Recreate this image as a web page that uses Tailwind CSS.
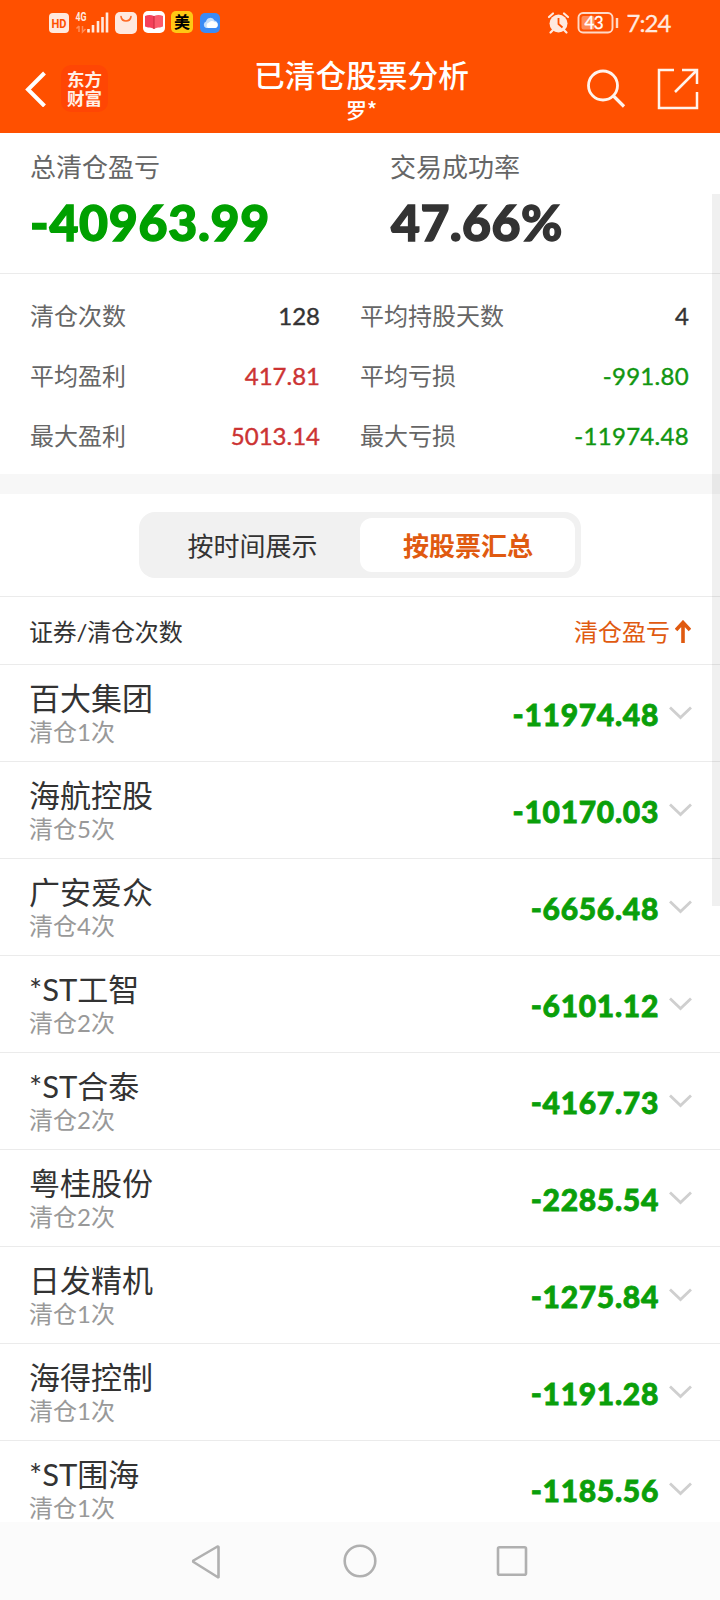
<!DOCTYPE html>
<html lang="zh-CN">
<head>
  <meta charset="UTF-8" />
  <meta name="viewport" content="width=device-width, initial-scale=1.0" />
  <title>已清仓股票分析</title>
  <script src="https://cdn.jsdelivr.net/npm/@tailwindcss/browser@4"></script>
</head>
<body class="bg-white text-[#333] font-[Lato,'Noto_Sans_CJK_SC',sans-serif]">
<div class="relative w-[720px] h-[1600px] flex flex-col overflow-hidden">

  <!-- Header -->
  <header class="h-[133px] shrink-0 bg-[#ff5000] text-white flex flex-col">
    <!-- Status bar -->
    <div class="h-[46px] flex justify-between pl-12 pr-[46px]">
      <svg class="w-[176px] h-[46px]" viewBox="48 0 176 46">
        <rect x="49" y="13" width="20" height="20" rx="4" fill="#ffe9df" />
        <text x="59" y="28" text-anchor="middle" textLength="15" lengthAdjust="spacingAndGlyphs" class="font-[Roboto] font-bold text-[13.500px] fill-[#ff5000]">HD</text>
        <text x="75.5" y="21" textLength="11" lengthAdjust="spacingAndGlyphs" class="font-[Roboto] font-bold text-[12px] fill-[#ffe9df]">4G</text>
        <path d="M79 26v6M79 26l-2.500 2.500M82.500 26v6l3-3" stroke="#ff8d59" stroke-width="1.500" fill="none" />
        <path d="M88.500 29v3.500M93 25v7.500M98 21v11.500M102.500 17v15.500M107 12.500v20" stroke="#ffe9df" stroke-width="2.600" fill="none" />
        <rect x="115" y="12" width="22" height="22" rx="5" fill="#ffe9df" />
        <path d="M121 16.500c1 6 9 6 10 0" stroke="#ff6a26" stroke-width="1.600" fill="none" stroke-linecap="round" />
        <rect x="143" y="11" width="22" height="22" rx="5" fill="#fff" />
        <path d="M145 16c3-1.500 6-1.500 9 0v13c-2-1.500-4-1.500-6-1.500l-3-1z" fill="#f5405a" />
        <path d="M163 16c-3-1.500-6-1.500-9 0v13c2-1.500 4-1.500 6-1.500l3-1z" fill="#fb5b6d" />
        <path d="M154 16v13" stroke="#c8283c" stroke-width="1" />
        <rect x="171" y="11" width="22" height="22" rx="5" fill="#ffc814" />
        <text x="182" y="28" text-anchor="middle" class="font-bold text-[16px] fill-black">美</text>
        <rect x="200" y="13" width="20" height="20" rx="5" fill="#3b8bf5" />
        <path d="M206 28a3.500 3.500 0 0 1 0-6.500a4.500 4.500 0 0 1 8.500-1a3.900 3.900 0 0 1 .500 7.500z" fill="#c5defb" />
        <path d="M208 28a3 3 0 0 1 1-5.500a3.500 3.500 0 0 1 5.500-.500a3 3 0 0 1 .500 6z" fill="#fff" />
      </svg>
      <svg class="w-[130px] h-[46px]" viewBox="544 0 130 46">
        <circle cx="558.500" cy="23.500" r="9" fill="#ffe9df" />
        <path d="M549 17l4-3.500M568 17l-4-3.500M553 30l-2.500 2.500M564 30l2.500 2.500" stroke="#ffe9df" stroke-width="2.200" stroke-linecap="round" />
        <path d="M558.500 18v6l4 3.500" stroke="#ff5000" stroke-width="1.800" fill="none" />
        <rect x="578.500" y="13" width="34" height="19.500" rx="4.500" fill="none" stroke="#ffd9c7" stroke-width="1.900" />
        <rect x="581.500" y="16" width="13" height="13.500" rx="2" fill="#ff8c59" />
        <path d="M617 18v10" stroke="#ffd9c7" stroke-width="2.400" />
        <text x="594" y="28.500" text-anchor="middle" textLength="19" class="text-[17px] fill-white stroke-white stroke-[0.300px]">43</text>
        <text x="626.500" y="32" textLength="45" class="text-[24px] fill-[#ffe9df] stroke-[#ffe9df] stroke-[0.300px]">7:24</text>
      </svg>
    </div>

    <!-- Title bar -->
    <div class="flex-1 flex items-start justify-between">
      <div class="w-[200px] flex items-center pt-[19px] pl-[25px]">
        <svg class="w-[22px] h-9" viewBox="0 0 22 36" fill="none" stroke="white" stroke-width="4"><path d="M19.500 2L3 18.500L19.500 35" /></svg>
        <div class="ml-[14px] w-[47px] h-[47px] rounded-[10px] bg-[#ff4604] flex flex-col items-center justify-center text-[17.500px] leading-[19px] font-bold text-[#fff0e6]">
          <span>东方</span>
          <span>财富</span>
        </div>
      </div>
      <div class="flex flex-col items-center pt-[10px] pl-[3px]">
        <h1 class="text-[30.700px] leading-[40px] font-medium">已清仓股票分析</h1>
        <p class="text-[21px] leading-[26px] font-medium">罗<span class="font-['Noto_Sans_CJK_SC']">*</span></p>
      </div>
      <div class="w-[200px] flex justify-end pt-[22px] pr-[21px]">
        <svg class="w-[112px] h-[42px]" viewBox="587 68 112 42" fill="none" stroke="#fff3ec" stroke-width="2.800">
          <circle cx="603" cy="85.500" r="14.500" />
          <path d="M613 95.500l11 11" stroke-width="3.200" />
          <path d="M674 70h-15v38h38v-16M682 70h15v14M675 92l22-22" stroke-width="2.500" />
        </svg>
      </div>
    </div>
  </header>

  <!-- Summary -->
  <section class="h-[141px] shrink-0 grid grid-cols-2 border-b border-[#ebebeb]">
    <div class="pl-[30px] pt-4">
      <p class="text-[26px] leading-9 text-[#666]">总清仓盈亏</p>
      <p class="text-[50px] leading-[60px] mt-[7px] font-black tracking-[0.700px] text-[#00a000] [-webkit-text-stroke:1.4px_#00a000]">-40963.99</p>
    </div>
    <div class="pl-[30px] pt-4">
      <p class="text-[26px] leading-9 text-[#666]">交易成功率</p>
      <p class="pl-px text-[50px] leading-[60px] mt-[7px] font-black tracking-[0.400px] [-webkit-text-stroke:1.4px_#333]">47.66%</p>
    </div>
  </section>

  <!-- Stats -->
  <section class="h-[200px] shrink-0 grid grid-cols-[290px_329px] gap-x-[40px] auto-rows-[60px] items-center pt-3 pl-[30px] text-[24px] leading-[36px] text-[#666]">
    <div class="flex justify-between"><span>清仓次数</span><span class="text-[#333] [-webkit-text-stroke:0.4px_#333]">128</span></div>
    <div class="flex justify-between"><span>平均持股天数</span><span class="text-[#333] [-webkit-text-stroke:0.4px_#333]">4</span></div>
    <div class="flex justify-between"><span>平均盈利</span><span class="text-[#cc3333] [-webkit-text-stroke:0.4px_#cc3333]">417.81</span></div>
    <div class="flex justify-between"><span>平均亏损</span><span class="tracking-[0.300px] text-[#119611] [-webkit-text-stroke:0.4px_#119611]">-991.80</span></div>
    <div class="flex justify-between"><span>最大盈利</span><span class="text-[#cc3333] [-webkit-text-stroke:0.4px_#cc3333]">5013.14</span></div>
    <div class="flex justify-between"><span>最大亏损</span><span class="tracking-[0.300px] text-[#119611] [-webkit-text-stroke:0.4px_#119611]">-11974.48</span></div>
  </section>

  <div class="h-5 shrink-0 bg-[#f7f7f7]"></div>

  <!-- Tabs -->
  <div class="h-[103px] shrink-0 flex justify-center pt-[18px] border-b border-[#ebebeb]">
    <div class="w-[442px] h-[66px] rounded-2xl bg-[#f1f1f1] p-1.5 flex text-[26px]">
      <button class="flex-1 pt-0.5">按时间展示</button>
      <button class="w-[215px] pt-0.5 pl-px rounded-xl bg-white font-bold text-[#e05a10]">按股票汇总</button>
    </div>
  </div>

  <!-- List header -->
  <div class="h-[68px] shrink-0 flex items-center justify-between pt-0.5 pl-[29px] pr-[29px] text-[24px] border-b border-[#ebebeb]">
    <span class="tracking-[-0.200px]">证券/清仓次数</span>
    <span class="flex items-center gap-[5px] text-[#e05a10]">
      清仓盈亏
      <svg class="w-4 h-6" viewBox="0 0 16 24" fill="none" stroke="currentColor" stroke-width="3.600"><path d="M8 23V3M1 10l7-7.500L15 10" /></svg>
    </span>
  </div>

  <!-- Stocks -->
  <main id="stockList" class="flex-1 min-h-0 overflow-hidden"></main>

  <!-- Navigation bar -->
  <nav class="h-[78px] shrink-0 bg-[#fbfbfb]">
    <svg class="w-[720px] h-[78px]" viewBox="0 1522 720 78" fill="none" stroke="#b0b0b0" stroke-width="2.600" stroke-linejoin="round">
      <path d="M218.500 1547v29.500a.500 .500 0 0 1-1 .500L193.500 1562a1 1 0 0 1 0-1.500L217.500 1546.500z" />
      <circle cx="360" cy="1561" r="15.300" />
      <rect x="498" y="1547.300" width="28" height="27.500" rx="1.500" />
    </svg>
  </nav>

  <!-- Scrollbar -->
  <div class="absolute right-0 top-[194px] w-2 h-[712px] bg-black/6"></div>
</div>

<script>
  const stocks = [
    { name: "百大集团", count: 1, profit: "-11974.48" },
    { name: "海航控股", count: 5, profit: "-10170.03" },
    { name: "广安爱众", count: 4, profit: "-6656.48" },
    { name: "*ST工智", count: 2, profit: "-6101.12" },
    { name: "*ST合泰", count: 2, profit: "-4167.73" },
    { name: "粤桂股份", count: 2, profit: "-2285.54" },
    { name: "日发精机", count: 1, profit: "-1275.84" },
    { name: "海得控制", count: 1, profit: "-1191.28" },
    { name: "*ST围海", count: 1, profit: "-1185.56" }
  ];

  const stockList = document.getElementById("stockList");
  stocks.forEach(stock => {
    const row = document.createElement("div");
    row.className = "h-[97px] flex items-center justify-between pl-[29px] pr-7 border-b border-[#ebebeb]";
    row.innerHTML = `
      <div class="pt-0.5">
        <h2 class="text-[31px] leading-[36px]">${stock.name}</h2>
        <p class="text-[24px] leading-[32px] text-[#999]">清仓${stock.count}次</p>
      </div>
      <div class="flex items-center gap-[10px]">
        <span class="pt-0.5 text-[30px] leading-[36px] font-black tracking-[0.700px] text-[#0a9f0a] [-webkit-text-stroke:0.8px_#0a9f0a]">${stock.profit}</span>
        <svg class="w-[23px] h-[14px]" viewBox="0 0 23 14" fill="none" stroke="#cfcfcf" stroke-width="2.800"><path d="M1 1.500l10.500 10L22 1.500" /></svg>
      </div>
    `;
    stockList.appendChild(row);
  });
</script>
</body>
</html>
